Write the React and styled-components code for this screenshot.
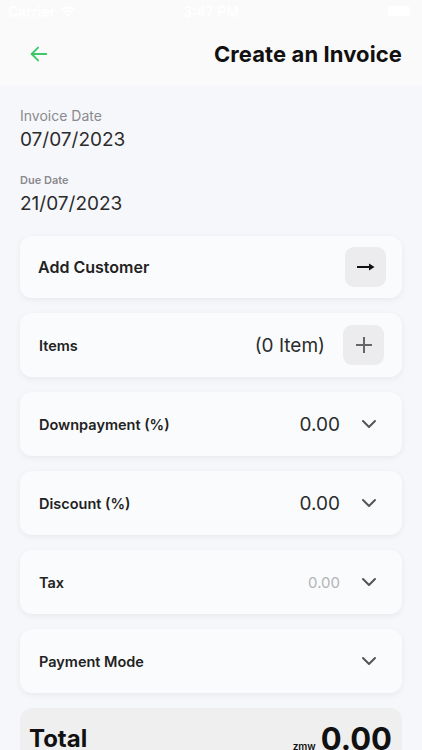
import React from 'react';
import styled, { createGlobalStyle } from 'styled-components';

const GlobalStyle = createGlobalStyle`
  html, body {
    margin: 0;
    padding: 0;
    background: #f6f7fb;
    font-family: Inter, "Noto Sans", "Liberation Sans", sans-serif;
  }
  * { box-sizing: border-box; }
`;

const Screen = styled.div`
  width: 422px;
  height: 750px;
  overflow: hidden;
  background: #f6f7fb;
`;

const Header = styled.div`
  background: #fafafa;
  height: 86px;
  display: flex;
  flex-direction: column;
`;

const StatusBar = styled.div`
  height: 22px;
  display: flex;
  align-items: center;
  justify-content: space-between;
  padding: 0 12px 0 8px;
  color: #ffffff;
  font-size: 14px;
  font-weight: 600;
  position: relative;
`;

const Carrier = styled.div`
  display: flex;
  align-items: center;
  gap: 5px;
`;

const Clock = styled.div`
  position: absolute;
  left: 0;
  right: 0;
  text-align: center;
`;

const Battery = styled.div`
  width: 22px;
  height: 10px;
  border-radius: 3px;
  background: #ffffff;
`;

const NavRow = styled.div`
  flex: 1;
  display: flex;
  align-items: center;
  justify-content: space-between;
  padding: 0 20px 0 28px;
`;

const BackButton = styled.button`
  border: none;
  background: none;
  padding: 0;
  display: flex;
  cursor: pointer;
`;

const Title = styled.h1`
  margin: 0;
  font-size: 22px;
  font-weight: 700;
  color: #111;
  letter-spacing: 0.1px;
`;

const Body = styled.div`
  padding: 21px 20px 0;
  display: flex;
  flex-direction: column;
`;

const DateBlock = styled.div`
  display: flex;
  flex-direction: column;
  gap: 3px;
  margin-bottom: ${props => props.last ? '20px' : '19px'};
`;

const DateLabel = styled.span`
  font-size: ${props => props.small ? '11px' : '14px'};
  font-weight: ${props => props.small ? 600 : 400};
  color: #8a8a8e;
  line-height: 18px;
`;

const DateValue = styled.span`
  font-size: 19px;
  color: #2b2b2b;
  line-height: 24px;
`;

const Cards = styled.div`
  display: flex;
  flex-direction: column;
  gap: 15px;
`;

const Card = styled.div`
  height: ${props => props.h || 64}px;
  background: #fafbfd;
  border-radius: 12px;
  box-shadow: 0 2px 6px rgba(0, 0, 0, 0.06);
  display: flex;
  align-items: center;
  padding: 0 ${props => props.pr || 18}px 0 18px;
  gap: 18px;
`;

const CardLabel = styled.span`
  flex: 1;
  font-size: ${props => props.big ? '16px' : '14.5px'};
  font-weight: 600;
  color: #222;
  padding-left: ${props => props.big ? '0' : '1px'};
`;

const CardValue = styled.span`
  font-size: ${props => props.muted ? '15px' : '19px'};
  color: ${props => props.muted ? '#b3b3b6' : '#2b2b2b'};
`;

const IconButton = styled.button`
  width: 41px;
  height: 40px;
  border: none;
  border-radius: 9px;
  background: #ececee;
  display: flex;
  align-items: center;
  justify-content: center;
  padding: 0;
`;

const Chevron = styled.div`
  width: 22px;
  display: flex;
  justify-content: center;
  margin-right: 4px;
`;

const TotalCard = styled.div`
  margin-top: 15px;
  height: 60px;
  background: #efefef;
  border-radius: 12px;
  display: flex;
  align-items: center;
  justify-content: space-between;
  padding: 0 10px 0 9px;
`;

const TotalLabel = styled.span`
  font-size: 24px;
  font-weight: 700;
  color: #111;
`;

const Amount = styled.div`
  display: flex;
  align-items: baseline;
  gap: 5px;
`;

const Currency = styled.span`
  font-size: 10px;
  font-weight: 600;
  color: #111;
`;

const AmountValue = styled.span`
  font-size: 31px;
  font-weight: 700;
  color: #111;
`;

const ChevronIcon = () => (
  <svg width="16" height="10" viewBox="0 0 16 10" fill="none">
    <path d="M2 2l6 6 6-6" stroke="#555" strokeWidth="2" strokeLinecap="round" strokeLinejoin="round" />
  </svg>
);

const rows = [
  { label: 'Downpayment (%)', value: '0.00' },
  { label: 'Discount (%)', value: '0.00' },
  { label: 'Tax', value: '0.00', muted: true },
  { label: 'Payment Mode' },
];

const App = () => (
  <Screen>
    <GlobalStyle />
    <Header>
      <StatusBar>
        <Carrier>
          Carrier
          <svg width="16" height="12" viewBox="0 0 16 12" fill="#fff">
            <path d="M8 12l2.2-2.6a3.4 3.4 0 0 0-4.4 0z" />
            <path d="M3.6 6.8l1.3 1.5a4.8 4.8 0 0 1 6.2 0l1.3-1.5a6.8 6.8 0 0 0-8.8 0z" />
            <path d="M1.3 4.1l1.3 1.5a8.3 8.3 0 0 1 10.8 0l1.3-1.5a10.3 10.3 0 0 0-13.4 0z" />
          </svg>
        </Carrier>
        <Clock>3:47 PM</Clock>
        <Battery />
      </StatusBar>
      <NavRow>
        <BackButton>
          <svg width="22" height="22" viewBox="0 0 24 24" fill="none" stroke="#3cc76a" strokeWidth="2" strokeLinecap="round" strokeLinejoin="round">
            <path d="M20 12H4" />
            <path d="M11 5l-7 7 7 7" />
          </svg>
        </BackButton>
        <Title>Create an Invoice</Title>
      </NavRow>
    </Header>
    <Body>
      <DateBlock>
        <DateLabel>Invoice Date</DateLabel>
        <DateValue>07/07/2023</DateValue>
      </DateBlock>
      <DateBlock last>
        <DateLabel small>Due Date</DateLabel>
        <DateValue>21/07/2023</DateValue>
      </DateBlock>
      <Cards>
        <Card h={62} pr={16}>
          <CardLabel big>Add Customer</CardLabel>
          <IconButton>
            <svg width="20" height="10" viewBox="0 0 20 10" fill="none">
              <path d="M1 5h16" stroke="#111" strokeWidth="2" />
              <path d="M13 1.5L18.5 5 13 8.5z" fill="#111" />
            </svg>
          </IconButton>
        </Card>
        <Card>
          <CardLabel>Items</CardLabel>
          <CardValue>(0 Item)</CardValue>
          <IconButton>
            <svg width="20" height="20" viewBox="0 0 20 20" fill="none" stroke="#666" strokeWidth="2">
              <path d="M10 2v16M2 10h16" />
            </svg>
          </IconButton>
        </Card>
        {rows.map(row => (
          <Card key={row.label}>
            <CardLabel>{row.label}</CardLabel>
            {row.value && <CardValue muted={row.muted}>{row.value}</CardValue>}
            <Chevron><ChevronIcon /></Chevron>
          </Card>
        ))}
      </Cards>
      <TotalCard>
        <TotalLabel>Total</TotalLabel>
        <Amount>
          <Currency>zmw</Currency>
          <AmountValue>0.00</AmountValue>
        </Amount>
      </TotalCard>
    </Body>
  </Screen>
);

export default App;
